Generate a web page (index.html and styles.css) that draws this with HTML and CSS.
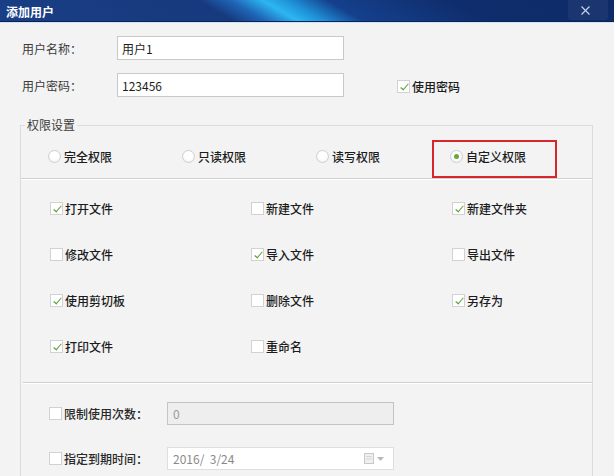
FILE: index.html
```html
<!DOCTYPE html>
<html>
<head>
  <meta charset="utf-8">
  <title>添加用户</title>
  <link rel="stylesheet" href="styles.css">
</head>
<body>
  <div class="dialog">
    <div class="titlebar">
      <span class="caption">添加用户</span>
      <span class="close">
        <svg width="9" height="9" viewBox="0 0 9 9"><path d="M0.5 0.5L8.5 8.5M8.5 0.5L0.5 8.5" stroke="#c9d6ea" stroke-width="1.1"/></svg>
      </span>
    </div>

    <div class="content">
      <div class="field-row">
        <label class="field-label">用户名称：</label>
        <input class="text-input" type="text" value="用户1">
      </div>
      <div class="field-row">
        <label class="field-label">用户密码：</label>
        <input class="text-input" type="text" value="123456">
        <label class="check use-pass"><span class="box checked"></span>使用密码</label>
      </div>

      <fieldset class="rights">
        <legend>权限设置</legend>

        <div class="radio-row">
          <label class="radio"><span class="dot"></span>完全权限</label>
          <label class="radio"><span class="dot"></span>只读权限</label>
          <label class="radio"><span class="dot"></span>读写权限</label>
          <label class="radio marked"><span class="dot on"></span>自定义权限</label>
        </div>

        <div class="check-grid">
          <label class="check"><span class="box checked"></span>打开文件</label>
          <label class="check"><span class="box"></span>新建文件</label>
          <label class="check"><span class="box checked"></span>新建文件夹</label>
          <label class="check"><span class="box"></span>修改文件</label>
          <label class="check"><span class="box checked"></span>导入文件</label>
          <label class="check"><span class="box"></span>导出文件</label>
          <label class="check"><span class="box checked"></span>使用剪切板</label>
          <label class="check"><span class="box"></span>删除文件</label>
          <label class="check"><span class="box checked"></span>另存为</label>
          <label class="check"><span class="box checked"></span>打印文件</label>
          <label class="check"><span class="box"></span>重命名</label>
        </div>

        <div class="limits">
          <div class="limit-row">
            <label class="check limit-label"><span class="box"></span>限制使用次数：</label>
            <div class="limit-input disabled">0</div>
          </div>
          <div class="limit-row">
            <label class="check limit-label"><span class="box"></span>指定到期时间：</label>
            <div class="limit-input date">
              <span>2016/&nbsp; 3/24</span>
              <span class="picker">
                <svg width="10" height="11" viewBox="0 0 10 11">
                  <rect x="0.5" y="0.5" width="9" height="10" fill="#f0f0f0" stroke="#c8c8c8"/>
                  <line x1="2" y1="3.5" x2="8" y2="3.5" stroke="#d6d6d6"/>
                  <line x1="2" y1="6" x2="8" y2="6" stroke="#d6d6d6"/>
                </svg>
                <svg width="7" height="4" viewBox="0 0 7 4"><path d="M0 0h7L3.5 4z" fill="#b8b8b8"/></svg>
              </span>
            </div>
          </div>
        </div>
      </fieldset>
    </div>
  </div>
</body>
</html>
```

FILE: styles.css
```css
* {
  box-sizing: border-box;
}

body {
  margin: 0;
  background-color: #f3f3f3;
  font-family: "Noto Sans CJK SC", "Microsoft YaHei", sans-serif;
  font-size: 12px;
  color: #1c1c1c;
  overflow: hidden;
}

.dialog {
  width: 614px;
  height: 476px;
  background-color: #f3f3f3;
}

.titlebar {
  height: 23px;
  display: flex;
  align-items: center;
  justify-content: space-between;
  padding-left: 6px;
  background: linear-gradient(30deg, #1a3f86 0%, #17397d 36%, #1f64b6 41%, #2cb6f2 46%, #1e8fd6 50%, #15408d 56%, #0f2d6c 75%, #0e2b68 100%);
  border-bottom: 1px solid #cfe4f6;
  box-shadow: inset 0 -1px 0 #0b2255;
}

.caption {
  color: #ffffff;
  font-weight: bold;
  font-size: 12px;
}

.close {
  width: 40px;
  height: 20px;
  margin-right: 6px;
  padding-right: 6px;
  align-self: flex-start;
  display: flex;
  align-items: center;
  justify-content: center;
  background-color: rgba(255, 255, 255, 0.05);
  border-radius: 0 0 3px 3px;
}

.content {
  padding: 13px 22px 0 20px;
}

.field-row {
  display: flex;
  align-items: center;
  height: 24px;
  margin-bottom: 13px;
}

.field-label {
  width: 97px;
  padding-left: 2px;
  color: #3a3a3a;
}

.text-input {
  width: 227px;
  height: 24px;
  border: 1px solid #c9c9c9;
  background: #ffffff;
  padding: 0 4px;
  font-family: inherit;
  font-size: 12px;
  color: #1c1c1c;
  outline: none;
}

.check {
  display: flex;
  align-items: center;
  font-weight: 500;
}

.use-pass {
  margin-left: 53px;
  margin-top: 2px;
}

.box {
  width: 13px;
  height: 13px;
  margin-right: 2px;
  border: 1px solid #d2d2d2;
  background: #ffffff;
  position: relative;
}

.box.checked::after {
  content: "";
  position: absolute;
  left: 2px;
  top: 1px;
  width: 6px;
  height: 3px;
  border-left: 1.5px solid #5aa23a;
  border-bottom: 1.5px solid #5aa23a;
  transform: translate(1px, 2px) rotate(-50deg) scaleX(1.2);
}

.rights {
  margin: 21px 0 0 0;
  padding: 0;
  border: none;
  border-top: 1px solid #dcdcdc;
  border-left: 1px solid #dcdcdc;
  border-right: 1px solid #dcdcdc;
  width: 573px;
}

.rights legend {
  margin-left: 4px;
  padding: 0 2px;
  line-height: 14px;
  color: #3a3a3a;
}

.radio-row {
  display: flex;
  height: 47px;
  padding: 8px 0 5px 27px;
  border-bottom: 1px solid #d0d0d0;
  box-shadow: 0 1px 0 #ffffff;
}

.radio {
  width: 134px;
  display: flex;
  align-items: center;
  position: relative;
  font-weight: 500;
}

.dot {
  width: 13px;
  height: 13px;
  margin-right: 3px;
  border-radius: 50%;
  border: 1px solid #cfcfcf;
  background: radial-gradient(circle at 50% 40%, #ffffff 40%, #ececec 100%);
  position: relative;
}

.dot.on::after {
  content: "";
  position: absolute;
  left: 3px;
  top: 3px;
  width: 5px;
  height: 5px;
  border-radius: 50%;
  background: #6aa83a;
}

.radio.marked::after {
  content: "";
  position: absolute;
  left: -18px;
  top: 0;
  width: 121px;
  height: 34px;
  border: 2px solid #d8262d;
}

.check-grid {
  display: grid;
  grid-template-columns: 201px 201px 1fr;
  grid-auto-rows: 46px;
  padding: 6px 0 13px 27px;
  border-bottom: 1px solid #d0d0d0;
  box-shadow: 0 1px 0 #ffffff;
  margin-left: 2px;
}

.limits {
  padding: 19px 0 0 28px;
}

.limit-row {
  display: flex;
  align-items: center;
  height: 23px;
  margin-bottom: 22px;
}

.limit-label {
  width: 118px;
  color: #2a2a2a;
}

.limit-input {
  width: 227px;
  height: 23px;
  display: flex;
  align-items: center;
  justify-content: space-between;
  padding: 0 9px 0 5px;
  border: 1px solid #c9c9c9;
  color: #9a9a9a;
}

.limit-input.disabled {
  background: #eeeeee;
  border-color: #c4c4c4;
}

.limit-input.date {
  background: #ffffff;
  border-color: #dedede;
  color: #8a8a8a;
}

.picker {
  display: flex;
  align-items: center;
  gap: 3px;
}
```
